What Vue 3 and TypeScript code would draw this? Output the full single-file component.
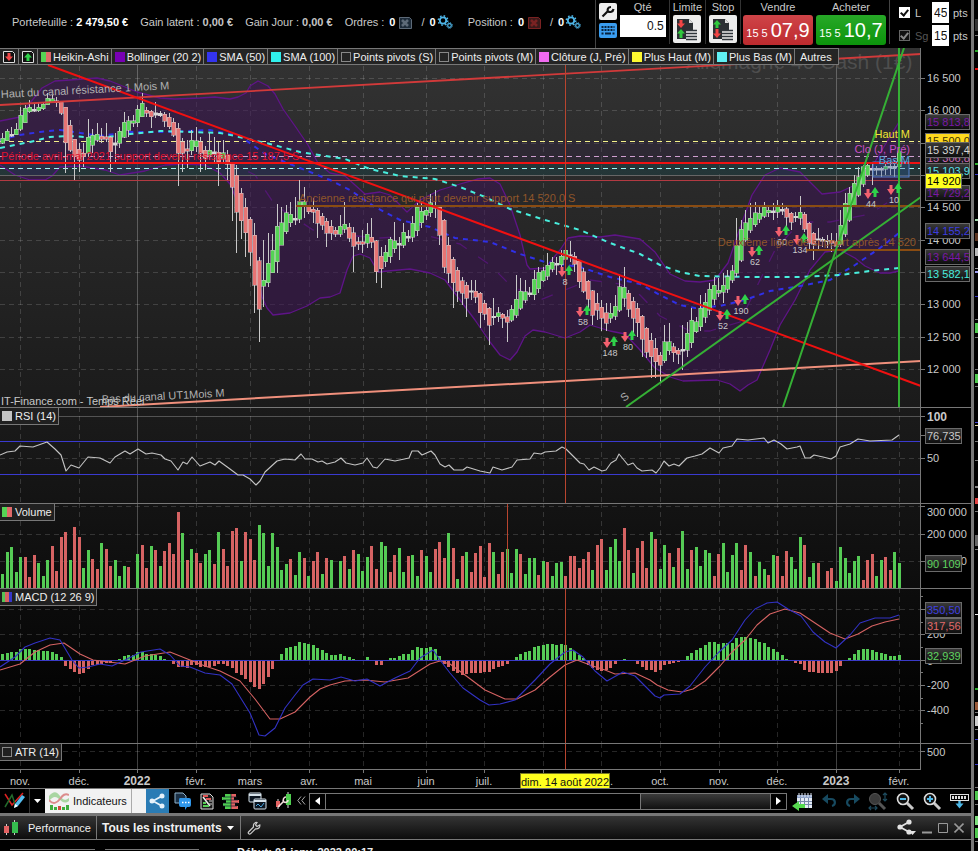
<script setup lang="ts">
import { ref } from 'vue'

type Quad = [number, number, number, number]
interface Tag { y: number; text: string; color: string; fill?: string; w?: number }

const price = ref('0.5')
const limitPts = ref('45')
const stopPts = ref('15')
const limitOn = ref(true)
const stopOn = ref(true)

const amounts = [
  { label: 'Portefeuille :', value: '2 479,50 €', strong: true },
  { label: 'Gain latent :', value: '0,00 €', strong: false },
  { label: 'Gain Jour :', value: '0,00 €', strong: false },
]
const counters = [
  { label: 'Ordres :', cross: '#5d6a78', box: '#1c2a38' },
  { label: 'Position :', cross: '#7a2222', box: '#3a1a1a' },
]

const legend = [
  { label: 'Heikin-Ashi', kind: 'duo' },
  { label: 'Bollinger (20 2)', kind: 'purple' },
  { label: 'SMA (50)', kind: 'indigo' },
  { label: 'SMA (100)', kind: 'cyan' },
  { label: 'Points pivots (S)', kind: 'empty' },
  { label: 'Points pivots (M)', kind: 'empty' },
  { label: 'Clôture (J, Pré)', kind: 'pink' },
  { label: 'Plus Haut (M)', kind: 'yellow' },
  { label: 'Plus Bas (M)', kind: 'aqua' },
]

const months = [
  { x: 20, t: 'nov.' }, { x: 79, t: 'déc.' }, { x: 137, t: '2022', year: true },
  { x: 196, t: 'févr.' }, { x: 250, t: 'mars' }, { x: 309, t: 'avr.' },
  { x: 363, t: 'mai' }, { x: 426, t: 'juin' }, { x: 484, t: 'juil.' },
  { x: 543, t: '' }, { x: 601, t: '' }, { x: 660, t: 'oct.' }, { x: 719, t: 'nov.' },
  { x: 777, t: 'déc.' }, { x: 836, t: '2023', year: true }, { x: 899, t: 'févr.' },
]

const STEP = 4.506
const barX = (i: number) => 2.5 + i * STEP

/* Heikin-Ashi bars: body top, body bottom, high, low, in thirds of a pixel below the base line. */
const autumnToSummer: Quad[] = [
  [145,160,130,162],[124,152,118,152],[132,138,110,142],[118,134,100,136],[76,118,50,122],[55,98,45,98],
  [52,65,30,70],[58,63,40,66],[52,62,40,65],[42,56,38,60],[24,44,10,46],[26,36,15,40],[32,38,22,50],
  [36,70,34,75],[52,158,52,250],[106,180,90,185],[147,200,147,270],[178,210,160,245],[190,200,160,230],
  [142,190,88,200],[136,165,118,190],[132,150,98,155],[138,148,115,160],[140,148,100,155],[142,185,138,245],
  [158,165,130,215],[124,160,110,175],[96,142,65,145],[92,120,78,140],[92,100,75,110],[58,98,44,110],
  [40,80,10,80],[60,70,52,82],[64,80,60,115],[68,75,35,85],[70,77,62,80],[72,94,66,110],[82,110,70,118],
  [97,135,85,140],[115,190,100,288],[155,190,145,245],[176,184,150,235],[150,182,120,195],[152,170,110,185],
  [155,190,140,245],[180,205,168,240],[180,195,130,210],[185,192,140,215],[186,215,155,288],[188,205,150,222],
  [195,222,180,270],[220,292,215,392],[255,366,225,490],[310,392,295,448],[352,428,325,500],[388,486,380,528],
  [436,586,400,670],[512,658,500,755],[570,588,450,650],[520,578,430,590],[480,548,432,550],[408,515,342,548],
  [398,465,352,465],[368,425,345,432],[372,398,335,412],[384,391,320,405],[335,388,270,400],[335,350,290,385],
  [350,365,345,372],[358,367,325,400],[360,400,355,445],[378,406,370,420],[393,430,385,472],[408,430,390,450],
  [420,433,412,440],[408,432,375,440],[402,418,335,430],[412,445,400,455],[428,468,410,545],[455,463,440,480],
  [455,463,420,490],[432,460,398,475],[442,456,385,475],[452,545,450,578],[498,536,470,595],[486,515,465,530],
  [448,500,440,520],[452,476,395,488],[460,465,440,510],[426,465,400,475],[438,444,420,455],[400,442,378,455],
  [352,422,340,438],[364,398,335,415],[360,376,345,390],[338,368,312,380],[345,355,300,385],[352,435,348,465],
  [390,532,388,550],[465,550,440,580],[508,578,500,655],[540,604,530,635],[572,610,560,645],[585,625,575,680],
  [602,607,570,630],[604,622,570,640],[610,668,605,715],[640,672,630,690],[655,705,650,765],[678,683,625,705],
  [668,680,650,695],[672,685,668,715],[680,697,660,755],[658,690,645,695],[628,675,555,685],[604,655,565,660],
  [605,630,570,640],[608,614,590,620],[568,614,540,630],[546,596,530,610],[542,572,530,575],[526,558,490,570],
  [516,538,500,545],[520,526,500,555],[498,524,480,530],[480,508,470,540],[494,499,452,515],[498,522,485,545],
  [514,575,510,595],[545,604,535,610],[574,628,570,660],[602,676,600,705],[640,660,610,690],[652,684,630,722],
  [668,700,640,722],[670,685,640,700],[648,678,615,690],[590,660,555,665],
]
const summerToWinter: Quad[] = [
  [682,715,620,740],[700,748,690,770],[724,774,712,820],[745,788,730,830],[768,838,765,892],[805,876,800,895],
  [840,890,820,955],[865,905,835,955],[885,916,875,965],[845,902,795,910],[845,872,790,885],[860,878,850,905],
  [870,882,865,912],[868,873,795,930],[820,870,785,890],[780,848,745,865],[785,815,770,820],[745,800,705,812],
  [727,772,700,790],[688,750,670,765],[675,718,650,735],[690,700,655,712],[675,696,640,730],[650,688,630,700],
  [632,660,615,670],[556,640,475,650],[508,600,480,605],[488,540,450,545],[475,510,430,518],[458,494,425,500],
  [460,478,440,490],[442,468,425,475],[450,458,435,470],[452,458,430,480],[440,456,420,475],[448,453,430,465],
  [446,472,440,505],[460,486,455,510],[468,473,455,485],[456,474,408,495],[462,508,455,515],[490,550,485,570],
  [520,552,515,600],[536,541,505,570],[538,543,530,560],[540,545,525,565],[540,550,520,575],[545,558,520,570],
  [495,552,450,560],[430,522,400,530],[400,480,380,485],[370,435,345,440],[350,405,320,410],[320,372,315,380],
  [316,345,310,350],[325,331,312,375],[325,331,318,345],[325,330,320,350],[318,328,310,345],[318,324,308,345],
  [318,325,300,350],[275,320,265,320],
]
const candles = [
  ...autumnToSummer.map(q => q.map(v => 90 + v / 3)),
  ...summerToWinter.map(q => q.map(v => 60 + v / 3)),
].map(([top, bottom, high, low], i, all) => {
  const before = i ? (all[i - 1][0] + all[i - 1][1]) / 2 : 145
  return { x: barX(i), top, h: bottom - top, high, low, up: (top + bottom) / 2 < before }
})

/* Weekly volume heights; negative for a falling session. */
const volume = [
  14,36,41,16,31,-31,-11,-33,25,12,28,-42,-17,-51,-56,28,-61,-51,20,38,-29,-19,45,-39,-22,28,12,22,-21,0,
  34,-43,-20,42,-38,22,-37,-45,-34,-76,55,-28,39,-35,-25,34,38,-24,56,-39,-22,-57,-60,27,-56,-49,-28,63,55,22,
  55,41,18,24,-29,13,36,-30,12,-27,-36,14,-30,28,0,27,-32,19,-38,34,17,31,-42,-19,46,42,-16,-33,40,16,
  -32,33,12,-38,32,16,-39,-46,-30,55,-40,9,-32,36,-16,-35,-42,-11,-45,36,-14,-36,39,15,39,-34,14,30,30,-13,
  27,-26,12,25,26,-12,-32,-32,-20,-29,-36,18,-43,-49,18,41,49,27,-60,-38,15,-40,-47,-20,56,-49,19,43,-35,21,
  -40,57,19,-38,41,22,38,35,-12,-34,45,16,33,45,-18,-43,36,-12,26,19,-13,33,-32,-12,-37,31,19,51,-43,11,
  25,-25,0,-17,-20,7,41,30,15,27,32,-8,-28,-34,12,28,-31,-18,36,25,
]
const histogram = [
  6,7,8,8,11,11,11,10,10,9,9,8,6,3,-6,-9,-12,-14,-13,-9,-5,-5,-4,-3,-3,-1,1,4,5,5,
  8,8,6,6,5,4,1,0,-4,-7,-7,-8,-5,-5,-7,-7,-7,-6,-4,-4,-6,-8,-13,-15,-19,-22,-27,-29,-24,-17,
  -9,-1,6,12,13,14,18,17,16,15,12,10,7,5,5,6,4,3,1,0,0,3,0,-5,-5,0,2,2,4,6,
  6,10,13,12,12,13,11,4,-4,-7,-11,-13,-15,-14,-13,-13,-13,-12,-12,-9,-7,-6,-4,-1,3,6,8,9,13,14,
  15,16,16,15,16,15,12,9,5,2,-5,-8,-10,-11,-10,-8,-4,0,1,0,-1,-4,-7,-10,-10,-12,-10,-5,-4,-3,
  -2,0,4,7,10,12,15,18,18,16,17,17,17,22,23,23,22,21,18,17,13,11,8,5,1,-1,-3,-4,-10,-12,
  -12,-13,-13,-13,-13,-11,-6,-1,2,6,10,11,11,10,8,7,6,4,4,5,
]

const upper = '0,121 20,117 30,103 42,88 55,81 70,80 97,78 110,81 125,87 137,92 160,98 175,99 200,98 215,97 230,99 238,97 246,93 250,86 258,81 268,86 275,94 283,109 295,126 308,145 318,163 330,173 345,176 355,185 365,194 380,192 390,195 407,212 420,200 440,190 460,184 478,179 490,178 500,184 510,205 520,235 527,265 530,269 545,268 560,250 568,238 580,236 600,237 615,235 640,239 655,252 670,274 685,281 700,282 715,280 728,263 740,228 752,195 765,175 780,168 800,172 812,184 822,194 840,192 855,185 870,170 885,145 899,122'
const lower = '0,165 15,175 30,180 45,180 52,176 60,167 80,166 105,170 120,175 145,171 165,165 185,164 205,165 220,173 230,184 240,208 250,238 256,263 262,297 267,308 273,315 290,313 307,306 320,298 330,297 340,293 347,270 353,256 360,254 370,258 378,272 388,271 410,269 430,273 445,280 460,300 475,320 490,342 500,355 510,360 517,352 525,336 533,330 545,332 565,338 580,332 590,325 610,331 625,334 640,350 655,368 670,377 683,381 717,380 730,384 740,391 748,385 757,380 770,350 780,325 795,300 810,270 825,252 840,250 855,258 865,266 880,273 890,273 899,271'
const middle = '225,160 255,175 275,205 313,230 345,235 380,238 425,235 460,244 490,265 510,285 540,300 560,292 590,280 620,284 640,295 660,316 690,331 710,331 740,322 760,280 775,250 800,222 830,222 870,214 899,195'
const cloud = upper + ' ' + lower.split(' ').reverse().join(' ')
const sma100 = '0,148 30,142 50,137 70,136 100,138 130,134 160,131 190,132 220,133 235,136 270,144 300,152 313,154 345,159 370,169 400,176 435,179 460,187 485,197 510,209 545,220 580,230 610,243 640,254 660,265 680,272 700,276 750,277 800,277 840,275 870,271 899,268'
const sma50 = '0,140 20,135 40,132 60,130 100,136 130,132 170,132 210,130 240,136 265,154 300,168 330,180 350,190 375,207 400,220 430,227 455,238 490,242 520,254 545,262 580,267 610,277 640,284 660,295 680,305 695,308 720,306 745,300 770,291 800,286 830,280 855,265 880,248 899,233'
const rsi = '0,455 7,452 15,451 20,446 33,447 47,442 55,449 61,455 66,471 71,465 79,468 88,457 100,458 110,463 115,457 125,451 130,454 138,449 146,454 152,453 161,455 165,459 171,461 178,470 183,462 187,464 192,457 200,466 210,462 215,465 219,461 230,469 238,475 243,475 250,479 256,485 260,481 265,472 277,461 285,459 295,460 301,454 305,459 312,459 318,462 322,461 327,464 335,462 341,458 346,463 355,465 363,463 367,458 373,467 377,468 385,459 395,461 409,458 412,451 418,451 422,455 431,451 435,455 440,464 445,467 449,465 454,470 463,470 467,467 480,471 490,473 493,467 502,470 512,467 517,460 530,459 534,453 541,454 545,452 556,451 562,447 566,449 575,458 580,463 584,464 589,470 594,467 602,471 606,470 611,463 616,460 619,454 628,465 633,463 637,468 642,471 652,470 656,473 660,468 664,461 669,466 674,464 679,466 687,458 695,456 702,454 710,448 719,453 723,448 732,446 737,439 748,440 764,438 768,443 774,440 781,444 787,449 797,447 800,446 805,458 810,458 814,455 823,457 831,459 836,456 840,447 850,444 858,439 870,441 892,440 899,435'
const macd = '0,667 15,657 25,647 35,643 50,638 60,640 66,650 72,660 79,668 88,667 100,664 112,666 125,660 141,652 160,649 170,655 180,666 190,667 205,673 220,675 232,684 250,713 259,735 265,736 275,728 285,708 295,695 303,685 313,679 330,680 341,677 355,681 367,679 380,686 395,678 410,671 420,658 433,650 440,660 450,673 463,688 480,700 489,705 500,704 515,700 535,680 550,664 565,652 573,650 583,657 595,671 607,681 623,672 635,676 645,686 655,696 660,698 664,695 680,694 690,686 705,667 718,653 732,640 745,620 755,609 767,603 777,602 788,609 801,616 813,632 825,642 836,648 850,635 860,623 875,618 890,618 899,615'
const signal = '0,670 20,664 35,652 50,645 64,643 80,654 93,660 125,664 145,656 170,652 185,658 205,666 220,671 240,681 255,699 270,719 280,719 295,712 310,697 320,689 330,685 345,681 365,680 385,682 408,678 430,664 440,661 450,664 465,675 485,690 505,699 517,699 535,690 550,677 565,665 577,660 590,665 605,670 615,674 635,673 650,680 657,685 668,690 682,692 693,689 705,681 720,666 732,652 745,640 757,625 770,614 785,609 800,613 815,623 830,633 845,639 858,634 872,626 885,622 899,619'

const signals = [
  { x: 565, y: 271, n: '8' }, { x: 583, y: 311, n: '58' }, { x: 610, y: 342, n: '148' }, { x: 628, y: 336, n: '80' },
  { x: 723, y: 315, n: '52' }, { x: 741, y: 300, n: '190' }, { x: 755, y: 251, n: '62' }, { x: 782, y: 231, n: '60' },
  { x: 800, y: 239, n: '134' }, { x: 871, y: 193, n: '44' }, { x: 894, y: 189, n: '10' },
]

const priceTicks = [
  { y: 78, t: '16 500' }, { y: 110, t: '16 000' }, { y: 143, t: '' }, { y: 175, t: '' }, { y: 207, t: '14 500' },
  { y: 240, t: '14 000' }, { y: 272, t: '' }, { y: 304, t: '13 000' }, { y: 337, t: '12 500' }, { y: 369, t: '12 000' },
]
const priceTags: Tag[] = [
  { y: 122, text: '15 813,8', color: '#7a18a6' },
  { y: 141, text: '15 500,0', color: '#3b3000', fill: '#ffd91e' },
  { y: 158, text: '15 306,8', color: '#c767b8' },
  { y: 150, text: '15 397,4', color: '#d6d6d6' },
  { y: 193, text: '14 729,2', color: '#7a18a6' },
  { y: 171, text: '15 103,9', color: '#59e0e8' },
  { y: 181, text: '14 920', color: '#000', fill: '#ffff1e', w: 36 },
  { y: 231, text: '14 155,2', color: '#3c3ce0' },
  { y: 257, text: '13 644,5', color: '#7a18a6' },
  { y: 274, text: '13 582,1', color: '#49ecdf' },
]
const macdTicks = [{ y: 634, t: '200' }, { y: 661, t: '0' }, { y: 685, t: '-200' }, { y: 710, t: '-400' }]
const macdTags: Tag[] = [
  { y: 610, text: '350,50', color: '#4040e0', w: 36 },
  { y: 626, text: '317,56', color: '#e06a6a', w: 36 },
  { y: 656, text: '32,939', color: '#5fd35f', w: 36 },
]

/* Left edge of the neighbouring window. */
const slivers = [
  { y: 19, h: 12, c: '#333' }, { y: 35, h: 1, c: '#777' }, { y: 50, h: 2, c: '#27a327' }, { y: 68, h: 2, c: '#e31010' },
  { y: 163, h: 2, c: '#2faf2f' }, { y: 174, h: 1, c: '#3838c8' }, { y: 219, h: 2, c: '#9fd6a8' }, { y: 233, h: 8, c: '#5c3520' },
  { y: 248, h: 8, c: '#b9b9b9' }, { y: 268, h: 1, c: '#999' }, { y: 271, h: 2, c: '#9d9df0' }, { y: 296, h: 1, c: '#3838c8' },
  { y: 319, h: 1, c: '#777' }, { y: 323, h: 10, c: '#4fc94f' }, { y: 337, h: 1, c: '#777' }, { y: 369, h: 1, c: '#777' },
  { y: 374, h: 9, c: '#4fc94f' }, { y: 386, h: 1, c: '#777' }, { y: 422, h: 1, c: '#4646d4' }, { y: 425, h: 1, c: '#e6d9a6' },
  { y: 441, h: 1, c: '#777' }, { y: 460, h: 1, c: '#777' }, { y: 486, h: 2, c: '#888' }, { y: 498, h: 6, c: '#e04444' },
  { y: 511, h: 1, c: '#777' }, { y: 535, h: 11, c: '#666' }, { y: 549, h: 1, c: '#777' }, { y: 614, h: 1, c: '#eee' },
  { y: 688, h: 2, c: '#2faf2f' }, { y: 702, h: 8, c: '#9a5a3a' }, { y: 712, h: 1, c: '#777' }, { y: 716, h: 10, c: '#ccc' },
  { y: 729, h: 1, c: '#777' }, { y: 739, h: 1, c: '#3838c8' }, { y: 764, h: 1, c: '#3838c8' }, { y: 787, h: 1, c: '#777' },
  { y: 791, h: 9, c: '#4fc94f' }, { y: 804, h: 1, c: '#777' }, { y: 816, h: 9, c: '#7fe07f' }, { y: 828, h: 10, c: '#4fc94f' },
  { y: 841, h: 1, c: '#777' },
]
</script>

<template>
  <div class="desk">
    <main class="window">
      <header class="account">
        <div class="stats">
          <span v-for="a in amounts" :key="a.label" class="stat">{{ a.label }} <b :class="{ bright: a.strong }">{{ a.value }}</b></span>
          <span v-for="c in counters" :key="c.label" class="stat counter">
            <span>{{ c.label }}</span>
            <b class="bright">0</b>
            <button class="bare" :aria-label="c.label + ' annuler'">
              <svg width="13" height="13" viewBox="0 0 13 13"><path d="M.5 1.5h10l2 2v9h-12z" :fill="c.box" :stroke="c.cross" /><path d="M3 4l6 6M9 4l-6 6" :stroke="c.cross" stroke-width="2.6" /></svg>
            </button>
            <span class="slash">/</span>
            <b class="bright">0</b>
            <button class="bare" :aria-label="c.label + ' réglages'">
              <svg width="16" height="14" viewBox="0 0 16 14" fill="none" stroke="#4fb6e8"><circle cx="6" cy="5.500" r="3.200" stroke-width="1.800" /><circle cx="6" cy="5.500" r="4.700" stroke-width="1.500" stroke-dasharray="1.600 2.100" /><circle cx="12.500" cy="10.500" r="1.800" stroke-width="1.200" /><circle cx="12.500" cy="10.500" r="2.800" stroke-dasharray="1.200 1" /></svg>
            </button>
          </span>
        </div>
        <div class="tools">
          <button class="tool white" aria-label="Réglages"><svg width="18" height="17" viewBox="0 0 18 17"><path d="M3.500 13.500l6-6M9 8.500c-1-2 0-4.500 3-4.500M9 8.500c2 1 5 .5 5.500-2.500" fill="none" stroke="#111" stroke-width="2.200" /></svg></button>
          <button class="tool blue" aria-label="Clavier"><svg width="18" height="15" viewBox="0 0 18 15"><path d="M2.500 4h13M2.500 7h13" stroke="#06213c" stroke-width="2" stroke-dasharray="2 1" /><path d="M2.500 10.500h2M6 10.500h6M13.500 10.500h2" stroke="#06213c" stroke-width="2" /></svg></button>
        </div>
        <div class="field qty">
          <label for="qty">Qté</label>
          <input id="qty" v-model="price">
        </div>
        <div class="field kind">
          <span>Limite</span>
          <button class="order" aria-label="Limite">
            <svg width="27" height="27" viewBox="0 0 27 27"><path d="M4 3h12l4 4v16H4z" fill="#2b2f33" /><path d="M16 3v4h4" fill="#ddd" /><path d="M6.500 4h3v3.500h2.500L8 12 4 7.500h2.500z" fill="#f04545" /><path d="M6.500 22h3v-4.500h2.500L8 13l-4 4.500h2.500z" fill="#2fc83d" /><path d="M13 14h11v10H13z" fill="#e9e9e9" /><path d="M13 14.500h11M13 17.500h11M13 20.500h11M13 23.500h11" stroke="#30363c" stroke-width="1.400" /></svg>
          </button>
        </div>
        <div class="field kind">
          <span>Stop</span>
          <button class="order" aria-label="Stop">
            <svg width="27" height="27" viewBox="0 0 27 27"><path d="M4 3h12l4 4v16H4z" fill="#2b2f33" /><path d="M16 3v4h4" fill="#ddd" /><path d="M6.500 12h3V8.500h2.500L8 4 4 8.500h2.500z" fill="#2fc83d" /><path d="M6.500 13h3v4.500h2.500L8 22l-4-4.500h2.500z" fill="#f04545" /><path d="M13 14h11v10H13z" fill="#e9e9e9" /><path d="M13 14.500h11M13 17.500h11M13 20.500h11M13 23.500h11" stroke="#30363c" stroke-width="1.400" /></svg>
          </button>
        </div>
        <div class="field deal">
          <span>Vendre</span>
          <button class="quote sell"><small>15 5</small>07,9</button>
        </div>
        <div class="field deal last">
          <span>Acheter</span>
          <button class="quote buy"><small>15 5</small>10,7</button>
        </div>
        <div class="points">
          <label class="tick"><input v-model="limitOn" type="checkbox"><i></i>L</label>
          <label class="pts"><input v-model="limitPts"> pts</label>
          <label class="tick off"><input v-model="stopOn" type="checkbox"><i></i>Sg</label>
          <label class="pts"><input v-model="stopPts"> pts</label>
        </div>
      </header>

      <section class="charts">
        <div class="panel">
          <svg viewBox="0 48 971 359">
            <g class="grid">
              <line v-for="m in months" :key="m.x" :x1="m.x + .5" :x2="m.x + .5" y1="48" y2="407" :class="{ solid: m.year }" />
              <line v-for="p in priceTicks" :key="p.y" x1="0" x2="921" :y1="p.y + .5" :y2="p.y + .5" />
            </g>
            <text x="686" y="69" class="mark">Allemagne 40 Cash (1€)</text>
            <polygon :points="cloud" fill="#3d1454" fill-opacity=".55" />
            <rect x="0" y="141" width="921" height="22" fill="#35204a" fill-opacity=".25" />
            <rect x="0" y="164" width="921" height="12" fill="#174a50" fill-opacity=".35" />
            <polyline :points="upper" class="band" />
            <polyline :points="lower" class="band" />
            <polyline :points="middle" class="band mid" />
            <g class="flat">
              <line x1="0" x2="921" y1="141.500" y2="141.500" stroke="#f4f08a" stroke-dasharray="5 4" />
              <line x1="0" x2="921" y1="156.500" y2="156.500" stroke="#cf9fd0" stroke-dasharray="5 4" />
              <line x1="0" x2="921" y1="168.500" y2="168.500" stroke="#a8f0f0" stroke-dasharray="5 4" />
              <line x1="0" x2="921" y1="175.500" y2="175.500" stroke="#666" />
              <line x1="0" x2="921" y1="180.500" y2="180.500" stroke="#b23a42" />
            </g>
            <polyline :points="sma50" class="sma" stroke="#3030e8" />
            <polyline :points="sma100" class="sma" stroke="#48eedd" />
            <g class="flat">
              <g v-for="(c, i) in candles" :key="i">
                <line :x1="c.x" :x2="c.x" :y1="c.high" :y2="c.low" stroke="#c9c9c9" />
                <rect :x="c.x - 2" :y="c.top" width="4" :height="Math.max(1, c.h)" :fill="c.h < 2.500 ? '#d8d8d8' : c.up ? '#55d355' : '#e67474'" stroke="#d4cfcf" stroke-width=".5" />
              </g>
            </g>
            <rect x="873" y="162" width="36" height="15" fill="#2f5fa8" fill-opacity=".3" stroke="#5580cc" />
            <line x1="0" y1="105" x2="921" y2="54" stroke="#d23a3a" stroke-width="1.800" />
            <line x1="0" x2="921" y1="163" y2="163" stroke="#f01212" stroke-width="2" />
            <line x1="296" x2="921" y1="206" y2="206" stroke="#8a4c12" stroke-width="2" />
            <line x1="806" x2="921" y1="250" y2="250" stroke="#8a4c12" stroke-width="2" />
            <line x1="100" y1="407" x2="921" y2="361" stroke="#f0907c" stroke-width="2" />
            <line x1="48" y1="65" x2="921" y2="386" stroke="#f01010" stroke-width="2" />
            <g stroke="#35b035" stroke-width="2"><line x1="626" y1="407" x2="921" y2="197" /><line x1="783" y1="407" x2="904" y2="48" /><line x1="899" y1="48" x2="899" y2="407" /></g>
            <line x1="565.500" x2="565.500" y1="48" y2="407" class="cursor" />
            <g v-for="s in signals" :key="s.n">
              <path :transform="`translate(${s.x - 3} ${s.y + 1})`" d="M-1.500-5h3v4h2.500L0 5l-4-6h2.500z" fill="#f2606e" />
              <path :transform="`translate(${s.x + 4} ${s.y - 1})`" d="M-1.500 5h3v-4h2.500L0-5l-4 6h2.500z" fill="#2fd24a" />
              <text :x="s.x" :y="s.y + 14" class="count">{{ s.n }}</text>
            </g>
            <g fill="#b0b0b0">
              <text x="1" y="98" transform="rotate(-3 1 98)">Haut du canal résistance 1 Mois M</text>
              <text x="102" y="403" transform="rotate(-3 102 403)">Bas du canal UT1Mois M</text>
              <text x="624" y="402" transform="rotate(-38 624 402)">S</text>
            </g>
            <text x="1" y="405" fill="#c8c8c8">IT-Finance.com - Temps Réel</text>
            <text x="1" y="160" fill="#e0122e">Période avril-mai 2021 support devenu résistance 15 187,5 S</text>
            <text x="299" y="202" fill="#90562a">Ancienne résistance qui peut devenir support 14 520,0 S</text>
            <text x="916" y="246" text-anchor="end" fill="#90562a">Deuxième ligne de support après 14 520</text>
            <text x="910" y="138" text-anchor="end" fill="#f0e436">Haut M</text>
            <text x="910" y="153" text-anchor="end" fill="#c94fc6">Clo (J, Pré)</text>
            <text x="910" y="164" text-anchor="end" fill="#58a6dd">Bas M</text>
            <rect x="921" y="48" width="50" height="359" />
            <path d="M920.500 48v359" class="rule" />
            <g v-for="p in priceTicks" :key="p.y"><line x1="921" x2="925" :y1="p.y + .5" :y2="p.y + .5" class="rule" /><text x="927" :y="p.y + 4">{{ p.t }}</text></g>
            <g v-for="t in priceTags" :key="t.text">
              <rect x="925.500" :y="t.y - 7.500" :width="t.w ?? 44" height="15" :fill="t.fill ?? 'url(#tag)'" stroke="#6a6a6a" />
              <text x="927" :y="t.y + 4" :style="{ fill: t.color }">{{ t.text }}</text>
            </g>
            <defs><linearGradient id="tag" x2="0" y2="1"><stop stop-color="#3a3a3a" /><stop offset="1" stop-color="#0c0c0c" /></linearGradient></defs>
          </svg>
          <nav class="legend">
            <button class="pick" aria-label="Vendre sur le graphique"><svg width="14" height="14" viewBox="0 0 14 14"><path d="M1.500 1.500h9l2 2v9h-11z" fill="#111" stroke="#ddd" /><path d="M5.500 3h3v3.500h2.500L7 11 3 6.500h2.500z" fill="#f04848" /></svg></button>
            <button class="pick" aria-label="Acheter sur le graphique"><svg width="14" height="14" viewBox="0 0 14 14"><path d="M1.500 1.500h9l2 2v9h-11z" fill="#111" stroke="#ddd" /><path d="M5.500 11h3V7.500h2.500L7 3 3 7.500h2.500z" fill="#2fd24a" /></svg></button>
            <button v-for="l in legend" :key="l.label"><i :class="l.kind"></i>{{ l.label }}</button>
            <button class="others">Autres</button>
          </nav>
        </div>

        <div class="panel">
          <svg viewBox="0 407 971 96">
            <g class="grid"><line v-for="m in months" :key="m.x" :x1="m.x + .5" :x2="m.x + .5" y1="407" y2="503" :class="{ solid: m.year }" /><line x1="0" x2="921" y1="416.500" y2="416.500" class="solid" /><line x1="0" x2="921" y1="458.500" y2="458.500" /></g>
            <path d="M0 441.500h921M0 474.500h921" stroke="#3a3ad0" />
            <polyline :points="rsi" class="curve" stroke="#c4c4c4" />
            <line x1="565.500" x2="565.500" y1="407" y2="503" class="cursor" />
            <rect x="921" y="407" width="50" height="96" />
            <path d="M920.500 407v96M921 416.500h4M921 435.500h4M921 458.500h4" class="rule" /><path d="M0 407.500h971" class="rule" />
            <text x="927" y="421" class="strong">100</text><text x="927" y="462">50</text>
            <rect x="925.500" y="428.500" width="36" height="15" fill="url(#tag)" stroke="#6a6a6a" /><text x="927" y="440">76,735</text>
          </svg>
          <button class="title"><i class="grey"></i>RSI (14)</button>
        </div>

        <div class="panel">
          <svg viewBox="0 503 971 85">
            <g class="grid"><line v-for="m in months" :key="m.x" :x1="m.x + .5" :x2="m.x + .5" y1="503" y2="588" :class="{ solid: m.year }" /><path d="M0 506.500h921M0 534.500h921M0 561.500h921" /></g>
            <g class="flat"><rect v-for="(v, i) in volume" :key="i" :x="barX(i) - 1.500" :y="588 - Math.abs(v)" width="3" :height="Math.abs(v)" :fill="v > 0 ? '#55cb55' : '#d66363'" /></g>
            <line x1="507.500" x2="507.500" y1="503" y2="588" class="cursor" />
            <rect x="921" y="503" width="50" height="85" />
            <path d="M920.500 503v85M921 506.500h4M921 534.500h4M921 561.500h4" class="rule" /><path d="M0 503.500h971" class="rule" />
            <text x="927" y="516">300 000</text><text x="927" y="538">200 000</text><text x="927" y="565">100 000</text>
            <rect x="925.500" y="555.500" width="36" height="16" fill="url(#tag)" stroke="#6a6a6a" /><text x="927" y="568" style="fill: #5fd35f">90 109</text>
          </svg>
          <button class="title"><i class="duo"></i>Volume</button>
        </div>

        <div class="panel">
          <svg viewBox="0 588 971 155">
            <g class="grid"><line v-for="m in months" :key="m.x" :x1="m.x + .5" :x2="m.x + .5" y1="588" y2="743" :class="{ solid: m.year }" /><path d="M0 609.500h921M0 634.500h921M0 685.500h921M0 710.500h921" /></g>
            <g class="flat"><rect v-for="(v, i) in histogram" :key="i" :x="barX(i) - 1.500" :y="660 - Math.max(0, v)" width="3" :height="Math.abs(v)" :fill="v > 0 ? '#55cb55' : '#d66363'" /></g>
            <line x1="0" x2="921" y1="660.500" y2="660.500" stroke="#3a3ac8" />
            <polyline :points="signal" class="curve" stroke="#d66363" />
            <polyline :points="macd" class="curve" stroke="#3232c4" />
            <line x1="565.500" x2="565.500" y1="588" y2="743" class="cursor" />
            <rect x="921" y="588" width="50" height="155" />
            <path d="M920.500 588v155M921 596.500h2M921 609.500h4M921 622.500h2M921 634.500h4M921 647.500h2M921 660.500h4M921 672.500h2M921 685.500h4M921 698.500h2M921 710.500h4M921 723.500h2" class="rule" /><path d="M0 588.500h971" class="rule" />
            <text v-for="t in macdTicks" :key="t.t" x="927" :y="t.y + 4">{{ t.t }}</text>
            <g v-for="t in macdTags" :key="t.text">
              <rect x="925.500" :y="t.y - 7.500" :width="t.w" height="15" fill="url(#tag)" stroke="#6a6a6a" />
              <text x="927" :y="t.y + 4" :style="{ fill: t.color }">{{ t.text }}</text>
            </g>
          </svg>
          <button class="title"><i class="trio"></i>MACD (12 26 9)</button>
        </div>

        <div class="panel">
          <svg viewBox="0 743 971 45">
            <g class="grid"><line v-for="m in months" :key="m.x" :x1="m.x + .5" :x2="m.x + .5" y1="743" y2="769" :class="{ solid: m.year }" /><line x1="0" x2="921" y1="751.500" y2="751.500" /></g>
            <line x1="565.500" x2="565.500" y1="743" y2="770" class="cursor" />
            <rect x="921" y="743" width="50" height="45" /><rect x="0" y="770" width="971" height="18" />
            <path d="M0 743.500h971M920.500 743v26.500M0 769.500h921M921 751.500h4" class="rule" />
            <text x="927" y="756">500</text>
            <line v-for="m in months" :key="m.x" :x1="m.x + .5" :x2="m.x + .5" y1="769" y2="773" class="rule" />
            <text v-for="m in months" :key="m.x" :x="m.x" y="785" text-anchor="middle" :class="{ strong: m.year }">{{ m.t }}</text>
            <text x="610" y="785">.</text>
            <rect x="520.500" y="773.500" width="89" height="15" fill="#ffff1e" stroke="#777722" />
            <text x="565" y="786" text-anchor="middle" style="fill: #111">dim. 14 août 2022</text>
          </svg>
          <button class="title"><i class="empty"></i>ATR (14)</button>
        </div>
      </section>

      <div class="toolbar">
        <button class="ico draw" aria-label="Dessin"><svg width="22" height="18" viewBox="0 0 22 18"><path d="M1 2l7 11L19 1" fill="none" stroke="#d22" stroke-width="1.500" /><path d="M1 15L8 3l4 12" fill="none" stroke="#246a2c" stroke-width="1.500" /><path d="M10 16l1-4 7-9 3 2-7 9z" fill="#55bdf0" /><path d="M10 16l1-4 3 2z" fill="#fff" /></svg></button>
        <button class="drop" aria-label="Plus d’outils"><svg width="7" height="4" viewBox="0 0 7 4"><path d="M0 0h7L3.500 4z" fill="#fff" /></svg></button>
        <button class="indic"><svg width="20" height="19" viewBox="0 0 20 19"><path d="M0 4c5-6 8-4 11 0s5 5 9 2v3c-4 3-7 1-10-2S4 4 0 9z" fill="#a9d6a2" /><path d="M0 8c4 5 8 3 11-1s5-6 9-4" fill="none" stroke="#dc8c8c" stroke-width="2" /><path d="M1 18v-5h3v5zM5 18v-3h3v3zM13 18v-3h3v3zM17 18v-5h3v5z" fill="#3fae3f" /><path d="M9 18v-4h3v4z" fill="#d04b3f" /></svg>Indicateurs</button>
        <button class="indic more" aria-label="Liste des indicateurs"></button>
        <button class="share" aria-label="Partager"><svg width="16" height="16" viewBox="0 0 16 16"><path d="M13 3L4 8l9 5" fill="none" stroke="#e7f2fa" stroke-width="1.800" /><g fill="#e7f2fa"><circle cx="13" cy="3" r="2.500" /><circle cx="3" cy="8" r="2.500" /><circle cx="13" cy="13" r="2.500" /></g></svg></button>
        <div class="icons">
          <button class="ico" aria-label="Messages"><svg width="18" height="18" viewBox="0 0 18 18"><path d="M1 1h8l3 3v7H1z" fill="#1b3045" stroke="#8fb2cc" /><path d="M6 6h9q2 0 2 2v5q0 2-2 2h-2l-2 3v-3H7q-2 0-2-2V8q0-2 1-2z" fill="#2f96ea" /><path d="M8 10.500h1.500M11 10.500h1.500M14 10.500h1.500" stroke="#fff" stroke-width="1.500" /></svg></button>
          <button class="ico" aria-label="Rapport"><svg width="14" height="17" viewBox="0 0 14 17"><path d="M1 1h9l3 3v12H1z" fill="#191919" stroke="#ddd" /><path d="M3 4l7 9" stroke="#eee" stroke-width="1.500" /><path d="M3 3h5M6 6h5" stroke="#e05656" stroke-width="2" /><path d="M3 13h6M3 10h3" stroke="#57cf57" stroke-width="2" /><path d="M9 8h3M8 11h4" stroke="#ccc" /></svg></button>
          <button class="ico" aria-label="Carnet d’ordres"><svg width="18" height="17" viewBox="0 0 18 17"><path d="M3 1h6v3H3zM0 4h9v3H0zM4 7h5v3H4zM1 10h8v3H1zM3 13h6v3H3z" fill="#4fce4f" /><path d="M9 1h5v3H9zM9 4h3v3H9zM9 7h8v3H9zM9 10h4v3H9zM9 13h7v3H9z" fill="#e36262" /><path d="M1 4h14M1 7h15M1 10h15M1 13h14M9 1v15" stroke="#123" stroke-width=".7" /></svg></button>
          <button class="ico" aria-label="Fenêtres"><svg width="19" height="18" viewBox="0 0 19 18" fill="#0b1520" stroke="#d6e2ea"><rect x="1" y="1" width="12" height="9" rx="1" /><path d="M1 3h12" stroke-width="2" /><rect x="6" y="7" width="12" height="10" rx="1" /><path d="M6 9h12" stroke-width="2" /><path d="M8 14l2-2 3 3 3-4" fill="none" stroke="#4aa6e0" /></svg></button>
          <button class="ico" aria-label="Réglages des bougies"><svg width="17" height="18" viewBox="0 0 17 18"><path d="M3 7v10M13 0v16" stroke="#ddd" /><rect x="1" y="9" width="4" height="6" fill="#e36262" /><rect x="11" y="2" width="5" height="11" fill="#4fce4f" /><path d="M3 15l6-6M9 10c-2-2 0-5 2-5M9 10c2 1 4 0 4-2" fill="none" stroke="#f3dede" stroke-width="1.600" /></svg></button>
        </div>
        <button class="fold" aria-label="Replier"><svg width="9" height="9" viewBox="0 0 9 9"><path d="M4 .5L.8 4.500 4 8.500M8 .5L4.800 4.500 8 8.500" fill="none" stroke="#aaa" /></svg></button>
        <div class="scroll">
          <button aria-label="Reculer"><svg width="5" height="8" viewBox="0 0 5 8"><path d="M5 0v8L0 4z" fill="#fff" /></svg></button>
          <div class="track"><div class="thumb"></div></div>
          <button aria-label="Avancer"><svg width="5" height="8" viewBox="0 0 5 8"><path d="M0 0v8l5-4z" fill="#fff" /></svg></button>
        </div>
        <div class="view">
          <button class="ico" aria-label="Aller à la date"><svg width="22" height="19" viewBox="0 0 22 19"><path d="M5 3h15v13H5z" fill="#e4ebf5" /><path d="M5 3h15v3H5z" fill="#8fa3c8" /><path d="M7 1v4M10 1v4M13 1v4M16 1v4M19 1v4" stroke="#dfe6f4" /><path d="M5 9.500h15M5 12.500h15M8.500 6v10M12.500 6v10M16.500 6v10" stroke="#7686a8" /><path d="M0 14l7-5v3h6v4H7v3z" fill="#55d84f" /></svg></button>
          <button class="ico" aria-label="Annuler"><svg width="15" height="14" viewBox="0 0 15 14"><path d="M3 5h6c5 0 5 6 1 7" fill="none" stroke="#174a60" stroke-width="2.200" /><path d="M6 0v10L0 5z" fill="#174a60" /></svg></button>
          <button class="ico" aria-label="Rétablir"><svg width="15" height="14" viewBox="0 0 15 14"><path d="M12 5H6C1 5 1 11 5 12" fill="none" stroke="#174a60" stroke-width="2.200" /><path d="M9 0v10l6-5z" fill="#174a60" /></svg></button>
          <button class="ico" aria-label="Zoom automatique"><svg width="20" height="19" viewBox="0 0 20 19"><path d="M11 11l6 6" stroke="#555" stroke-width="3" /><circle cx="7" cy="7" r="5.500" fill="#3a3a3a" stroke="#555" /><path d="M17 1v8M15 3l2-2 2 2M15 7l2 2 2-2M1 16h8M3 14l-2 2 2 2M7 14l2 2-2 2" fill="none" stroke="#1e4b5e" stroke-width="1.200" /></svg></button>
          <button class="ico" aria-label="Zoom arrière"><svg width="19" height="19" viewBox="0 0 19 19"><path d="M11 11l6 6" stroke="#c9c9c9" stroke-width="3" /><circle cx="7" cy="7" r="5.500" fill="#111" stroke="#ddd" stroke-width="1.600" /><path d="M4 7h6" stroke="#4db8e8" stroke-width="2" /></svg></button>
          <button class="ico" aria-label="Zoom avant"><svg width="19" height="19" viewBox="0 0 19 19"><path d="M11 11l6 6" stroke="#c9c9c9" stroke-width="3" /><circle cx="7" cy="7" r="5.500" fill="#111" stroke="#ddd" stroke-width="1.600" /><path d="M4 7h6M7 4v6" stroke="#4db8e8" stroke-width="2" /></svg></button>
          <button class="ico" aria-label="Barre d’outils"><svg width="19" height="16" viewBox="0 0 19 16"><rect x=".5" y="1.500" width="18" height="6" fill="none" stroke="#ddd" /><path d="M2 4.500h15" stroke="#ddd" stroke-width="3" stroke-dasharray="2 1" /><path d="M9.500 8v4" stroke="#4db8e8" stroke-width="2.400" /><path d="M5.500 10.500h8l-4 5z" fill="#4db8e8" /></svg></button>
        </div>
      </div>

      <div class="perf">
        <svg class="bars" width="16" height="16" viewBox="0 0 16 16"><path d="M3.500 4v11M11.500 0v15" stroke="#ccc" /><rect x="1" y="6" width="5" height="7" fill="#e36262" /><rect x="9" y="2" width="6" height="11" fill="#35bd4e" /></svg>
        <span class="name">Performance</span>
        <button class="all">Tous les instruments <svg width="7" height="4" viewBox="0 0 7 4"><path d="M0 0h7L3.500 4z" fill="#fff" /></svg></button>
        <button class="ico key" aria-label="Réglages"><svg width="14" height="14" viewBox="0 0 14 14"><path d="M1.500 11l5-5C6 3 7.500 1.200 10 1.500L8.500 4l1.500 1.500L12.800 4c.4 2.500-1.500 4.200-4.300 3.800l-5 5c-1.500.8-2.800-.5-2-1.800z" fill="none" stroke="#ccc" stroke-width="1.200" /></svg></button>
        <div class="sys">
          <button class="ico" aria-label="Partager"><svg width="19" height="17" viewBox="0 0 19 17"><path d="M12 3L3 8l9 5" fill="none" stroke="#e2e2e2" stroke-width="1.800" /><g fill="#e2e2e2"><circle cx="12" cy="3" r="2.600" /><circle cx="3" cy="8" r="2.600" /><circle cx="12" cy="13" r="2.600" /><path d="M12 12h7l-3.500 4z" /></g></svg></button>
          <button class="ico" aria-label="Réduire"><svg width="10" height="12" viewBox="0 0 10 12"><path d="M0 10.500h10" stroke="#999" stroke-width="2" /></svg></button>
          <button class="ico" aria-label="Agrandir"><svg width="10" height="12" viewBox="0 0 10 12"><path d="M.5 1.500h9v9h-9z" fill="none" stroke="#999" /></svg></button>
          <button class="ico" aria-label="Fermer"><svg width="10" height="12" viewBox="0 0 10 12"><path d="M.5 1.500l9 9M9.500 1.500l-9 9" stroke="#999" stroke-width="1.600" /></svg></button>
        </div>
      </div>
      <div class="report"><i></i><i class="wide"></i><span>Début: 01 janv. 2022 00:17</span></div>
    </main>
    <aside class="next">
      <svg width="4" height="851" viewBox="0 0 4 851"><rect v-for="s in slivers" :key="s.y" x="1" :y="s.y" width="3" :height="s.h" :fill="s.c" /></svg>
    </aside>
  </div>
</template>

<style>
body { background: #000; }
</style>

<style scoped>
.desk { display: grid; grid-template-columns: minmax(0, 1fr) auto; background: #000; color: #c9c9c9; font: 11px/14px "Liberation Sans", Arial, sans-serif; min-height: 100vh; }
.window { display: flex; flex-direction: column; min-width: 0; }
.next { border-left: 3px solid #777; display: flex; }
.next svg { display: block; }
button { font: inherit; color: inherit; background: none; border: 0; padding: 0; margin: 0; }
input { font: inherit; margin: 0; border: 0; border-radius: 0; }

.account { display: flex; height: 48px; font-size: 11px; white-space: nowrap; overflow: hidden; }
.stats { flex: 1; display: flex; gap: 12px; padding: 15px 0 0 12px; min-width: 0; border-right: 1px solid #444; }
.stat b { color: #c4c4c4; }
.stat b.bright { color: #fff; }
.counter { display: flex; align-items: flex-start; }
.counter + .counter { margin-left: 3px; }
.counter b { margin-left: 5px; }
.counter .slash { margin-left: 9px; }
.bare { height: 14px; margin-left: 4px; }
.slash + b + .bare { margin-left: 1px; }
.bare svg { display: block; }
.tools { display: grid; gap: 3px; padding: 3px 0 0 3px; align-content: start; }
.tool { display: block; height: 17px; border-radius: 2px; }
.tool svg { display: block; }
.white { background: #eee; }
.blue { background: #3a9df0; height: 15px; }
.field { display: flex; flex-direction: column; align-items: center; gap: 1px; padding: 0 3px; border-right: 1px solid #333; height: 44px; }
.field input { width: 46px; height: 22px; box-sizing: border-box; background: #fff; color: #111; text-align: right; padding: 0 2px; font-size: 12px; }
.order { width: 28px; height: 28px; background: #ececec; border-radius: 2px; }
.order svg { display: block; }
.deal { padding: 0 1px 0 2px; border: 0; }
.deal.last { padding-right: 3px; border-right: 1px solid #444; }
.quote { width: 70px; height: 30px; border-radius: 3px; color: #fff; font-size: 20px; line-height: 30px; }
.quote small { font-size: 11px; margin-right: 3px; }
.sell { background: linear-gradient(#cf4448, #bd2a2e); }
.buy { background: linear-gradient(#27a827, #0c940c); }
.points { display: grid; grid-template-columns: 33px 38px; row-gap: 2px; padding: 2px 1px 0 9px; align-content: start; }
.tick { display: flex; align-items: center; gap: 5px; height: 21px; }
.tick input { position: absolute; opacity: 0; }
.tick i { width: 11px; height: 11px; background: #fff; position: relative; flex: none; }
.tick i::after { content: ""; position: absolute; left: 3px; top: 1px; width: 3px; height: 6px; border: solid #111; border-width: 0 2px 2px 0; transform: rotate(40deg); }
.tick.off { color: #555; }
.tick.off i { background: #111; box-shadow: inset 0 0 0 1px #666; }
.tick.off i::after { border-color: #888; }
.pts { display: flex; align-items: center; gap: 4px; }
.pts input { width: 17px; height: 21px; box-sizing: border-box; background: #fff; color: #111; padding: 0 2px; font-size: 12px; }

.charts { background: linear-gradient(#333, #1a1a1a 50%, #0a0a0a 78%, #000 92%); }
.panel { position: relative; }
.panel > svg { display: block; width: 100%; height: auto; overflow: hidden; }
.panel text { font-size: 11px; }
.panel svg text:not([fill]) { fill: #c9c9c9; }
.panel svg > g[fill] text { fill: #b0b0b0; }
.panel .mark { font-size: 21px; }
.panel svg text.mark { fill: #4e4e4e; }
.panel .strong { font-weight: bold; font-size: 12px; }
.panel .count { font-size: 9px; text-anchor: middle; }
.grid, .flat { shape-rendering: crispEdges; }
.grid line, .grid path { stroke: #fff; stroke-opacity: .15; stroke-dasharray: 5 4; fill: none; }
.grid .solid { stroke-opacity: .25; stroke-dasharray: none; }
.band { fill: none; stroke: #5f1488; stroke-width: 1.3; stroke-linejoin: round; }
.mid { stroke-dasharray: 12 14; stroke-opacity: .7; }
.sma { fill: none; stroke-width: 2; stroke-dasharray: 5 5; }
.curve { fill: none; stroke-width: 1.1; stroke-linejoin: round; }
.cursor { stroke: #b8452f; }
.rule { stroke: #777; fill: none; }
.legend { position: absolute; left: 0; top: 0; display: flex; background: #242424; border: solid #777; border-width: 1px 0; height: 15px; color: #eee; white-space: nowrap; }
.legend button { display: flex; align-items: center; gap: 2px; padding: 0 2px 0 3px; border-right: 1px solid #777; }
.legend .pick { padding: 0 2px; }
.legend .others { padding: 0 6px 0 5px; }
.title { position: absolute; left: 0; top: 1px; display: flex; align-items: center; gap: 3px; padding: 0 2px; height: 17px; background: #202020; border: solid #777; border-width: 0 1px 1px 0; color: #eee; }
.legend i, .title i { width: 10px; height: 10px; box-sizing: border-box; flex: none; }
.duo { background: linear-gradient(90deg, #55d355 50%, #e06a6a 50%); }
.trio { background: linear-gradient(90deg, #55c355 33%, #d66363 33% 66%, #3636c8 66%); }
.purple { background: #7800b4; }
.indigo { background: #3434f0; }
.cyan { background: #30f0ec; }
.pink { background: #f06af0; }
.yellow { background: #fdf830; }
.aqua { background: #60f0f4; }
.grey { background: #c4c4c4; }
.empty { border: 1px solid #888; }

.toolbar { display: flex; align-items: center; height: 24px; border-top: 1px solid #777; }
.ico { display: flex; align-items: center; }
.draw { padding-left: 4px; width: 30px; height: 24px; border-right: 1px solid #333; }
.drop { width: 15px; height: 24px; display: grid; place-items: center; }
.indic { background: #f2f2f2; color: #111; height: 24px; display: flex; align-items: center; gap: 4px; padding: 0 4px; border-right: 1px solid #aaa; }
.more { width: 14px; border: 0; }
.share { background: #2a7cb5; width: 23px; height: 24px; display: grid; place-items: center; }
.icons { display: flex; align-items: center; gap: 8px; padding-left: 5px; }
.fold { padding: 0 3px 0 5px; }
.scroll { flex: 1; display: flex; height: 17px; box-sizing: border-box; border: 1px solid #777; min-width: 0; }
.scroll button { width: 15px; display: grid; place-items: center; }
.track { flex: 1; display: flex; justify-content: flex-end; border: solid #777; border-width: 0 1px; }
.thumb { width: 29%; background: linear-gradient(#3a3a3a, #111); border-left: 1px solid #777; }
.view { display: flex; align-items: center; gap: 8px; padding: 0 2px 0 5px; }
.perf { display: flex; align-items: center; height: 23px; border-top: 3px solid #777; border-bottom: 1px solid #777; background: linear-gradient(#343434, #0c0c0c); color: #f0f0f0; }
.bars { margin-left: 3px; }
.name { padding: 0 5px 0 9px; }
.all { font-weight: bold; height: 100%; padding: 0 6px 0 5px; border: solid #777; border-width: 0 1px; display: flex; align-items: center; gap: 5px; font-size: 12px; }
.key { padding-left: 6px; }
.sys { margin-left: auto; display: flex; gap: 6px; padding-right: 7px; }
.report { height: 11px; display: flex; gap: 10px; padding: 0 10px; overflow: hidden; align-items: flex-start; color: #eee; font-weight: bold; }
.report i { width: 85px; height: 1px; background: #777; margin-top: 9px; }
.report i.wide { width: 94px; }
.report span { padding: 5px 0 0 28px; }
</style>
